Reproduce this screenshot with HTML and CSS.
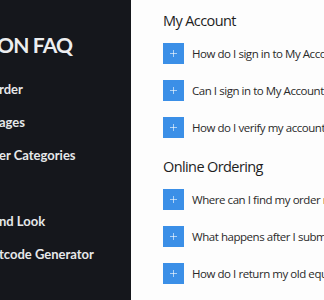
FILE: index.html
```html
<!DOCTYPE html>
<html>
<head>
<meta charset="utf-8">
<link rel="stylesheet" href="styles.css">
</head>
<body>
<div class="page">
  <aside class="sidebar">
    <div class="title">ON FAQ</div>
    <nav class="nav">
      <div class="nav-item">rder</div>
      <div class="nav-item">ages</div>
      <div class="nav-item">er Categories</div>
      <div class="nav-item"></div>
      <div class="nav-item">nd Look</div>
      <div class="nav-item">tcode Generator</div>
    </nav>
  </aside>
  <main class="main">
    <section class="section">
      <h2 class="section-title">My Account</h2>
      <ul class="faq-list">
        <li class="faq-item"><span class="toggle"></span><span class="question">How do I sign in to My Account?</span></li>
        <li class="faq-item"><span class="toggle"></span><span class="question">Can I sign in to My Account from my phone?</span></li>
        <li class="faq-item"><span class="toggle"></span><span class="question">How do I verify my account and email?</span></li>
      </ul>
    </section>
    <section class="section">
      <h2 class="section-title">Online Ordering</h2>
      <ul class="faq-list">
        <li class="faq-item"><span class="toggle"></span><span class="question">Where can I find my order number?</span></li>
        <li class="faq-item"><span class="toggle"></span><span class="question">What happens after I submit my order?</span></li>
        <li class="faq-item"><span class="toggle"></span><span class="question">How do I return my old equipment?</span></li>
      </ul>
    </section>
  </main>
</div>
</body>
</html>
```
FILE: styles.css
```css
* { box-sizing: border-box; }
html, body { margin: 0; padding: 0; }
body { width: 324px; height: 300px; overflow: hidden; background: #fdfdfd; }
.page { display: flex; height: 300px; }
.sidebar {
  width: 131px;
  flex: 0 0 131px;
  background: #15171c;
  color: #eceef0;
  font-family: Lato, "Open Sans", sans-serif;
  overflow: hidden;
  white-space: nowrap;
  padding-top: 34px;
}
.title {
  font-size: 21px;
  font-weight: 700;
  line-height: 22px;
  margin-left: -3px;
  letter-spacing: -0.8px;
}
.nav { margin-top: 17px; }
.nav-item {
  font-size: 13px;
  font-weight: 700;
  line-height: 33px;
  height: 33px;
  margin-left: -1px;
  color: #e6e8ea;
}
.main {
  flex: 1;
  padding: 11px 0 0 32px;
  font-family: "Open Sans", sans-serif;
  color: #222;
  overflow: hidden;
  white-space: nowrap;
}
.section { margin-bottom: 19px; }
.section-title {
  margin: 0 0 12px;
  font-size: 14.5px;
  font-weight: 400;
  line-height: 20px;
  letter-spacing: -0.6px;
  color: #1e1e1e;
}
.faq-list { list-style: none; margin: 0; padding: 0; display: flex; flex-direction: column; gap: 16px; }
.faq-item { display: flex; align-items: center; height: 21px; }
.toggle {
  position: relative;
  flex: 0 0 21px;
  width: 21px;
  height: 21px;
  background: #3b8fe7;
  margin-right: 8px;
}
.toggle::before, .toggle::after {
  content: "";
  position: absolute;
  background: rgba(255,255,255,0.6);
}
.toggle::before { left: 7px; top: 10px; width: 7px; height: 1px; }
.toggle::after { left: 10px; top: 7px; width: 1px; height: 7px; }
.question { font-size: 11.5px; letter-spacing: -0.45px; color: #2a2a2a; }
```
